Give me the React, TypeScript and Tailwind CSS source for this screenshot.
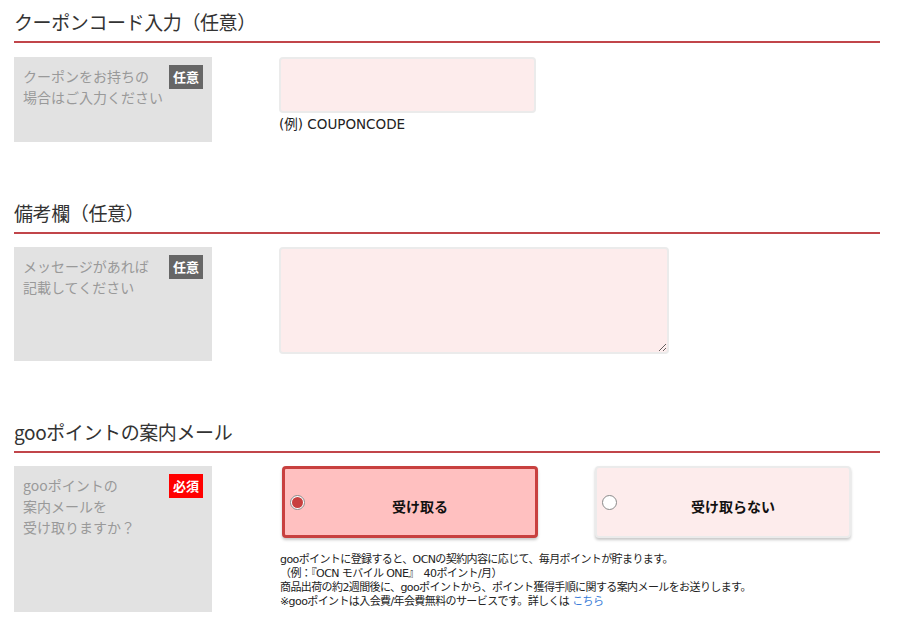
import React, { useState } from 'react'

const font = { fontFamily: '"Noto Sans CJK JP", "Noto Sans", sans-serif' }
const latinFont = { fontFamily: '"DejaVu Sans", "Noto Sans CJK JP", sans-serif' }

function Heading({ children, className = '' }: { children: React.ReactNode; className?: string }) {
  return (
    <h2
      className={`text-[19px] leading-[28px] tracking-[-0.4px] text-[#333] pb-[5px] border-b-2 border-[#c1454a] ${className}`}
    >
      {children}
    </h2>
  )
}

function Badge({ required }: { required?: boolean }) {
  return (
    <span
      className={`absolute top-[8px] right-[9px] w-[34px] h-[24px] flex items-center justify-center text-[13px] font-bold text-white ${
        required ? 'bg-[#ff0000]' : 'bg-[#666666]'
      }`}
    >
      {required ? '必須' : '任意'}
    </span>
  )
}

function LabelBox({ lines, height, required }: { lines: string[]; height: string; required?: boolean }) {
  return (
    <div className={`relative shrink-0 w-[198px] ${height} bg-[#e2e2e2] pl-[9px] pt-[9px]`}>
      {lines.map((l) => (
        <div key={l} className="text-[14px] leading-[21px] text-[#999]">
          {l}
        </div>
      ))}
      <Badge required={required} />
    </div>
  )
}

function Radio({ checked }: { checked: boolean }) {
  return (
    <span className="shrink-0 w-[15px] h-[15px] rounded-full border border-[#8a8a8a] bg-white flex items-center justify-center">
      {checked && <span className="w-[11px] h-[11px] rounded-full bg-[#c8403f]" />}
    </span>
  )
}

function Choice({ label, checked, onClick }: { label: string; checked: boolean; onClick: () => void }) {
  return (
    <button
      onClick={onClick}
      className={`w-[256px] h-[72px] rounded-[4px] flex items-center pl-[5px] shadow-[0_2px_3px_rgba(0,0,0,0.22)] ${
        checked ? 'bg-[#ffc0c0] border-[3px] border-[#c8403f]' : 'bg-[#fdecec] border-2 border-[#ebebeb]'
      }`}
    >
      <Radio checked={checked} />
      <span className="flex-1 text-center pt-[8px] text-[14px] font-bold text-[#111]">{label}</span>
    </button>
  )
}

export default function App() {
  const [receive, setReceive] = useState(true)

  return (
    <div style={font} className="bg-white min-h-[643px] pt-[8px] pl-[14px] w-[880px]">
      {/* クーポン */}
      <Heading>クーポンコード入力（任意）</Heading>
      <div className="flex mt-[14px]">
        <LabelBox lines={['クーポンをお持ちの', '場合はご入力ください']} height="h-[85px]" />
        <div className="ml-[67px]">
          <input
            type="text"
            className="block w-[257px] h-[56px] bg-[#fdecec] border-2 border-[#ebebeb] rounded-[4px] outline-none px-2"
          />
          <p style={latinFont} className="mt-[1px] text-[13.5px] leading-[20px] text-[#222]">
            (例) COUPONCODE
          </p>
        </div>
      </div>

      {/* 備考欄 */}
      <Heading className="mt-[57px]">備考欄（任意）</Heading>
      <div className="flex mt-[13px]">
        <LabelBox lines={['メッセージがあれば', '記載してください']} height="h-[114px]" />
        <div className="ml-[67px]">
          <textarea className="block w-[390px] h-[107px] bg-[#fdecec] border-2 border-[#ebebeb] rounded-[4px] outline-none p-2" />
        </div>
      </div>

      {/* gooポイント */}
      <Heading className="mt-[57px]">gooポイントの案内メール</Heading>
      <div className="flex mt-[13px]">
        <LabelBox lines={['gooポイントの', '案内メールを', '受け取りますか？']} height="h-[146px]" required />
        <div className="ml-[67px]">
          <div className="flex gap-[57px] ml-[3px]">
            <Choice label="受け取る" checked={receive} onClick={() => setReceive(true)} />
            <Choice label="受け取らない" checked={!receive} onClick={() => setReceive(false)} />
          </div>
          <div
            style={latinFont}
            className="mt-[15px] ml-[1px] text-[11px] leading-[14px] tracking-[-0.6px] text-[#222]"
          >
            <p>gooポイントに登録すると、OCNの契約内容に応じて、毎月ポイントが貯まります。</p>
            <p>（例：『OCN モバイル ONE』　40ポイント/月）</p>
            <p>商品出荷の約2週間後に、gooポイントから、ポイント獲得手順に関する案内メールをお送りします。</p>
            <p>
              ※gooポイントは入会費/年会費無料のサービスです。詳しくは{' '}
              <a href="#" className="text-[#3b7dd8]">
                こちら
              </a>
            </p>
          </div>
        </div>
      </div>
    </div>
  )
}
